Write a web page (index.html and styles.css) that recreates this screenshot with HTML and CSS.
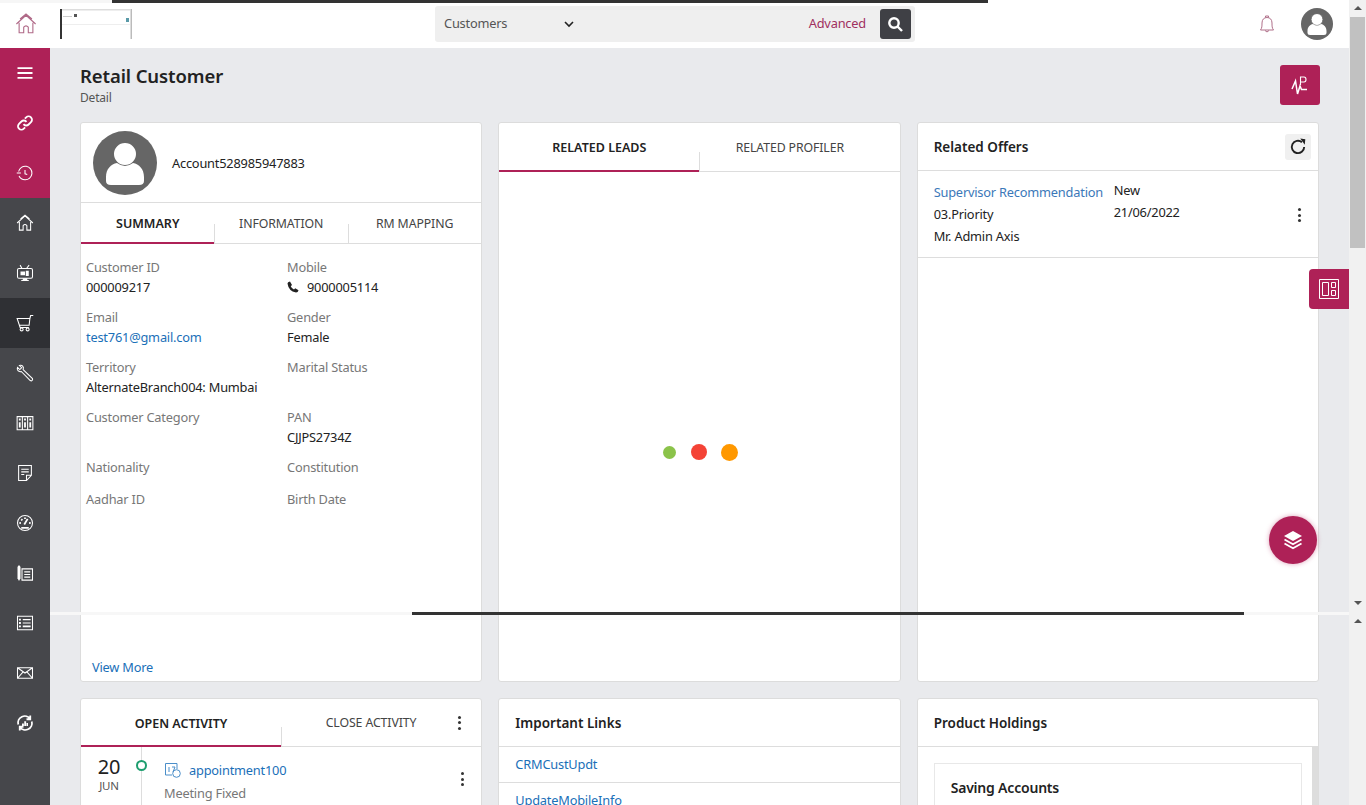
FILE: index.html
```html
<!DOCTYPE html>
<html lang="en">
<head>
    <meta charset="UTF-8">
    <meta name="viewport" content="width=device-width, initial-scale=1.0">
    <title>Retail Customer</title>
    <link rel="stylesheet" href="styles.css">
</head>
<body>
    <div class="app">
        <header class="topbar">
            <div class="top-home">
                <svg width="22" height="22" viewBox="0 0 24 24"><path d="M1.500 12 12 2.500 22.500 12M4.500 10.500V21.500H9.500V15.500Q12 12.500 14.500 15.500V21.500H19.500V10.500M5.500 6.500 12 1 18.500 6.500"/></svg>
            </div>
            <div class="logo">
                <svg width="72" height="30" viewBox="0 0 72 30"><rect width="72" height="30" fill="#fff"/><rect width="2" height="30" fill="#333"/><rect x="70.500" width="1.500" height="30" fill="#bbb"/><rect x="2" width="68" height="1.500" fill="#ddd"/><rect x="14" y="5" width="3" height="3" fill="#555"/><rect x="3" y="7" width="9" height="1" fill="#ccc"/><rect x="66" y="9" width="3" height="4" fill="#5a9aa8"/><rect x="2" y="15" width="68" height="1" fill="#eee"/></svg>
            </div>
            <div class="search">
                <div class="search-type">
                    <span>Customers</span>
                    <svg width="12" height="12" viewBox="0 0 12 12"><path d="M2 4 6 8 10 4"/></svg>
                </div>
                <a class="advanced">Advanced</a>
                <button class="search-btn">
                    <svg width="17" height="17" viewBox="0 0 17 17"><circle cx="7" cy="7" r="4.700"/><path d="M10.500 10.500 15 15"/></svg>
                </button>
            </div>
            <div class="top-right">
                <svg class="bell" width="20" height="20" viewBox="0 0 20 20"><path d="M3.500 16C5 14 5 12 5 9 5 5.500 7 3.500 10 3.500S15 5.500 15 9C15 12 15 14 16.500 16ZM8.500 3.500V2H11.500V3.500M8 16.500Q10 19.500 12 16.500"/></svg>
                <svg class="avatar" width="32" height="32" viewBox="0 0 64 64"><circle cx="32" cy="32" r="32" fill="#666"/><circle cx="32" cy="23" r="12" fill="#fff" stroke="#666" stroke-width="2"/><path d="M13 46C13 38 18 33 24 32Q32 38 40 32C46 33 51 38 51 46V50Q51 54 46 54H18Q13 54 13 50Z" fill="#fff"/></svg>
            </div>
        </header>

        <div class="workspace">
            <nav class="sidebar">
                <a class="nav-item brand"><svg class="nav-icon" viewBox="0 0 24 24"><path class="thick" d="M2 5.500H22M2 12H22M2 18.500H22"/></svg></a>
                <a class="nav-item brand"><svg class="nav-icon" viewBox="0 0 24 24"><path class="thick" d="M10 13.500a4.500 4.500 0 0 0 6.800.500l3.200-3.200a4.500 4.500 0 0 0-6.400-6.400l-1.800 1.800M14 10.500a4.500 4.500 0 0 0-6.800-.500l-3.200 3.200a4.500 4.500 0 0 0 6.400 6.400l1.800-1.800"/></svg></a>
                <a class="nav-item brand"><svg class="nav-icon" viewBox="0 0 24 24"><path d="M3.500 10A9 9 0 1 1 12 21 9 9 0 0 1 4 16M1 12H6.500M12 8V13L15 14"/></svg></a>
                <a class="nav-item"><svg class="nav-icon" viewBox="0 0 24 24"><path d="M1.500 12 12 2.500 22.500 12M4.500 10.500V21.500H9.500V15.500Q12 12.500 14.500 15.500V21.500H19.500V10.500M6 6.500 12 1.500 18 6.500"/></svg></a>
                <a class="nav-item"><svg class="nav-icon" viewBox="0 0 24 24"><path d="M4 6H20Q22 6 22 8V17Q22 19 20 19H4Q2 19 2 17V8Q2 6 4 6ZM8 6 5.500 1.500M14 6 17.500 1.500M7 22H17"/><path class="solid" d="M6 10H12V15H6ZM13 9H17V16H13ZM9 19H15V22H9Z"/></svg></a>
                <a class="nav-item active"><svg class="nav-icon" viewBox="0 0 24 24"><path d="M1.500 6H18.500L17.500 15H4.500ZM18.500 6 19.500 2H23M4.500 15 5.500 18H17"/><circle cx="7.500" cy="20.500" r="2"/><circle cx="15.500" cy="20.500" r="2"/></svg></a>
                <a class="nav-item"><svg class="nav-icon" viewBox="0 0 24 24"><path d="M2 4.500 5 7.500 7.500 5 4.500 2C8 .500 11 3.500 9.500 7.500L22 19.500Q22.500 21 21.500 22T19 22L7 10C3.500 11 .500 8 2 4.500Z"/></svg></a>
                <a class="nav-item"><svg class="nav-icon" viewBox="0 0 24 24"><path d="M1.500 3.500H22.500V21H1.500ZM8.500 3.500V21M15.500 3.500V21"/><path class="thick" d="M5 6V8.500M12 6V8.500M19 6V8.500M5 11V18M12 11V18M19 11V18"/></svg></a>
                <a class="nav-item"><svg class="nav-icon" viewBox="0 0 24 24"><path d="M3.500 2H20.500V15L14 22H3.500ZM14 22V15H20.500M7 7H17M7 10.500H17M7 14H11"/></svg></a>
                <a class="nav-item"><svg class="nav-icon" viewBox="0 0 24 24"><circle cx="12" cy="12" r="10"/><path class="thick" d="M12 4.500V6.500M4.500 12H6.500M17.500 12H19.500M7 7 8.500 8.500M15.500 6.500 11 14M7 18.500H17"/></svg></a>
                <a class="nav-item"><svg class="nav-icon" viewBox="0 0 24 24"><path d="M8 6.500H22V21.500H8ZM11 10.500H19M11 14H19M11 17.500H19"/><path class="solid" d="M2 4Q4-.500 6 4V19L4 22.500 2 19Z"/></svg></a>
                <a class="nav-item"><svg class="nav-icon" viewBox="0 0 24 24"><path d="M2 3H22V21H2ZM9 7.500H19.500M9 12H19.500"/><path class="thick" d="M4 7.500H6.500M4 12H6.500M4 16.500H6.500M9 16.500H19.500"/></svg></a>
                <a class="nav-item"><svg class="nav-icon" viewBox="0 0 24 24"><path d="M2 5H22V19H2ZM2 5 12 12 22 5M2 19 9.500 10.500M22 19 14.500 10.500"/></svg></a>
                <a class="nav-item"><svg class="nav-icon" viewBox="0 0 24 24"><path class="thick" d="M3 14A9 9 0 0 1 19 6.500M21 10A9 9 0 0 1 5 17.500M19 2V7H14M5 22V17H10"/><path class="solid" d="M8 12.500H10.500V16H8ZM11 9.500H13.500V16H11ZM14 12H16V16H14Z"/></svg></a>
            </nav>

            <main class="content">
                <div class="page-head">
                    <div>
                        <h1>Retail Customer</h1>
                        <div class="crumb">Detail</div>
                    </div>
                    <button class="pulse-btn">
                        <svg width="22" height="22" viewBox="0 0 22 22"><path d="M3 15 6.500 7 8.500 20 11 12 12.500 15.500H18"/><path d="M11.500 11V3H15Q17 3 17 5.500T15 8H11.500" class="thin"/></svg>
                    </button>
                </div>

                <div class="cards">
                    <section class="card tall">
                        <div class="profile">
                            <svg width="64" height="64" viewBox="0 0 64 64"><circle cx="32" cy="32" r="32" fill="#666"/><circle cx="32" cy="23" r="12" fill="#fff" stroke="#666" stroke-width="2"/><path d="M13 46C13 38 18 33 24 32Q32 38 40 32C46 33 51 38 51 46V50Q51 54 46 54H18Q13 54 13 50Z" fill="#fff"/></svg>
                            <span>Account528985947883</span>
                        </div>
                        <div class="tabs tabs-three">
                            <div class="tab on">SUMMARY</div>
                            <div class="tab split">INFORMATION</div>
                            <div class="tab split">RM MAPPING</div>
                        </div>
                        <div class="fields">
                            <div><div class="label">Customer ID</div><div class="value">000009217</div></div>
                            <div><div class="label">Mobile</div><div class="value phone"><svg width="12" height="12" viewBox="0 0 24 24"><path d="M6 1 10 8 7.500 10.500Q10 16 14 17L16.500 14.500 23 18.500Q22 23 18 23 3 20 1 5 1 2 6 1Z"/></svg>9000005114</div></div>
                            <div><div class="label">Email</div><div class="value"><a class="link">test761@gmail.com</a></div></div>
                            <div><div class="label">Gender</div><div class="value">Female</div></div>
                            <div><div class="label">Territory</div><div class="value">AlternateBranch004: Mumbai</div></div>
                            <div><div class="label">Marital Status</div></div>
                            <div><div class="label">Customer Category</div></div>
                            <div><div class="label">PAN</div><div class="value">CJJPS2734Z</div></div>
                            <div><div class="label">Nationality</div></div>
                            <div><div class="label">Constitution</div></div>
                            <div><div class="label">Aadhar ID</div></div>
                            <div><div class="label">Birth Date</div></div>
                        </div>
                        <a class="link view-more">View More</a>
                    </section>

                    <section class="card tall">
                        <div class="tabs tabs-leads">
                            <div class="tab on">RELATED LEADS</div>
                            <div class="tab split">RELATED PROFILER</div>
                        </div>
                        <div class="loader">
                            <i class="dot green"></i><i class="dot red"></i><i class="dot orange"></i>
                        </div>
                    </section>

                    <section class="card tall">
                        <div class="card-head">
                            <h2>Related Offers</h2>
                            <button class="refresh">
                                <svg width="18" height="18" viewBox="0 0 16 16"><path d="M13.500 8A5.500 5.500 0 1 1 11.500 3.700"/><path class="fill" d="M10 .500 14.500 1 14 6Z"/></svg>
                            </button>
                        </div>
                        <div class="offer">
                            <div class="offer-main">
                                <a class="link offer-link">Supervisor Recommendation</a>
                                <div>03.Priority</div>
                                <div>Mr. Admin Axis</div>
                            </div>
                            <div class="offer-side">
                                <div>New</div>
                                <div>21/06/2022</div>
                            </div>
                            <span class="kebab"><i></i><i></i><i></i></span>
                        </div>
                    </section>

                    <section class="card">
                        <div class="tabs tabs-activity">
                            <div class="tab on">OPEN ACTIVITY</div>
                            <div class="tab split">CLOSE ACTIVITY</div>
                            <span class="kebab"><i></i><i></i><i></i></span>
                        </div>
                        <div class="activity">
                            <div class="date"><b>20</b><span>JUN</span></div>
                            <div class="rail"><i></i></div>
                            <div class="activity-body">
                                <div class="activity-title">
                                    <svg width="18" height="18" viewBox="0 0 18 18"><path d="M1.500 2.500H13V8M1.500 2.500V14H8M5 6V11M8 6H11L9 11"/><circle cx="12.500" cy="12.500" r="3.800"/></svg>
                                    <a class="link">appointment100</a>
                                </div>
                                <div class="muted">Meeting Fixed</div>
                            </div>
                            <span class="kebab"><i></i><i></i><i></i></span>
                        </div>
                    </section>

                    <section class="card">
                        <div class="card-head"><h2>Important Links</h2></div>
                        <a class="link link-row">CRMCustUpdt</a>
                        <a class="link link-row">UpdateMobileInfo</a>
                    </section>

                    <section class="card">
                        <div class="card-head"><h2>Product Holdings</h2></div>
                        <div class="holdings">
                            <div class="holding"><h2>Saving Accounts</h2></div>
                        </div>
                    </section>
                </div>
            </main>
        </div>
    </div>

    <div class="scrollbar">
        <i class="arrow up"></i>
        <div class="thumb"></div>
        <i class="arrow down"></i>
        <i class="arrow up second"></i>
    </div>

    <!-- overlays -->
    <div class="progress-top"></div>
    <div class="seam"><div class="seam-bar"></div></div>
    <div class="side-tab">
        <svg width="20" height="20" viewBox="0 0 20 20"><path d="M.500.500H19.500V19.500H.500ZM3.500 3.500H9.500V16.500H3.500ZM12.500 3.500H16.500V8.500H12.500ZM12.500 11.500H16.500V16.500H12.500Z"/></svg>
    </div>
    <button class="fab">
        <svg width="20" height="20" viewBox="0 0 20 20"><path class="fill" d="M10 1 19 6 10 11 1 6Z"/><path d="M1.500 9.500 10 14.200 18.500 9.500M1.500 13.500 10 18.200 18.500 13.500"/></svg>
    </button>
</body>
</html>
```

FILE: styles.css
```css
* {
    box-sizing: border-box;
}
body {
    margin: 0;
    width: 1366px;
    height: 805px;
    overflow: hidden;
    display: flex;
    background-color: #e9eaed;
    font-family: "Noto Sans", sans-serif;
    font-size: 12.800px;
    letter-spacing: -.2px;
    color: #222;
}
a {
    text-decoration: none;
}
button {
    border: none;
    padding: 0;
    font: inherit;
}
h1, h2 {
    margin: 0;
}
svg {
    fill: none;
    stroke: currentColor;
}

/* frame */
.app {
    flex: 1;
    min-width: 0;
    display: flex;
    flex-direction: column;
}
.workspace {
    flex: 1;
    display: flex;
    min-height: 0;
}

/* top bar */
.topbar {
    height: 48px;
    flex: none;
    display: flex;
    align-items: center;
    background-color: #fff;
}
.top-home {
    width: 50px;
    padding-left: 2px;
    display: flex;
    justify-content: center;
    color: #b06a88;
}
.top-home svg {
    stroke-width: 1.200;
}
.logo {
    display: flex;
    margin-left: 10px;
}
.logo svg {
    stroke: none;
}
.search {
    width: 480px;
    height: 36px;
    margin-left: 303px;
    display: flex;
    align-items: center;
    background-color: #efefef;
    border-radius: 3px;
}
.search-type {
    width: 147px;
    padding: 0 7px 2px 9px;
    display: flex;
    align-items: center;
    justify-content: space-between;
    color: #555;
}
.search-type svg {
    stroke: #222;
    stroke-width: 1.6;
    margin-top: 2px;
}
.advanced {
    margin-left: auto;
    padding-bottom: 2px;
    color: #a0305f;
}
.search-btn {
    width: 31px;
    height: 30px;
    margin: 0 4px 0 14px;
    display: flex;
    align-items: center;
    justify-content: center;
    background-color: #3f4045;
    border-radius: 3px;
    color: #fff;
}
.search-btn svg {
    stroke-width: 2.4;
}
.top-right {
    flex: 1;
    display: flex;
    align-items: center;
    justify-content: flex-end;
    padding-right: 16px;
    gap: 24px;
}
.bell {
    color: #b0708a;
    stroke-width: 1;
}
.avatar {
    stroke: none;
}

/* sidebar */
.sidebar {
    width: 50px;
    flex: none;
    background-color: #46474b;
}
.nav-item {
    height: 50px;
    display: flex;
    align-items: center;
    justify-content: center;
    color: #fff;
}
.brand {
    background-color: #ae2157;
}
.active {
    background-color: #2f3034;
}
.nav-icon {
    width: 18px;
    height: 18px;
    stroke-width: 1.4;
}
.nav-icon .thick {
    stroke-width: 2.4;
}
.nav-icon .solid {
    fill: currentColor;
    stroke: none;
}

/* content */
.content {
    flex: 1;
    min-width: 0;
    padding: 17px 30px 0;
    overflow: hidden;
}
.page-head {
    height: 57px;
    display: flex;
    justify-content: space-between;
}
h1 {
    font-size: 18.500px;
    font-weight: 600;
    line-height: 22px;
    letter-spacing: -.1px;
}
.crumb {
    margin-top: 3px;
    font-size: 12px;
    line-height: 16px;
    color: #555;
}
.pulse-btn {
    width: 40px;
    height: 40px;
    margin-right: -1px;
    display: flex;
    align-items: center;
    justify-content: center;
    background-color: #ae2157;
    border-radius: 3px;
    color: #fff;
}
.pulse-btn svg {
    stroke-width: 1.5;
}
.pulse-btn .thin {
    stroke-width: 1.100;
}
.cards {
    display: grid;
    grid-template-columns: repeat(3, 1fr);
    grid-template-rows: 560px 300px;
    gap: 16px;
}
.card {
    display: flex;
    flex-direction: column;
    background-color: #fff;
    border: 1px solid #dcdcdc;
    border-radius: 3px;
    overflow: hidden;
}

/* profile card */
.profile {
    height: 80px;
    flex: none;
    padding: 8px 12px 0;
    display: flex;
    gap: 15px;
    border-bottom: 1px solid #ddd;
}
.profile svg {
    stroke: none;
}
.profile span {
    align-self: center;
    padding-bottom: 7px;
}

/* tabs */
.tabs {
    height: 41px;
    flex: none;
    display: flex;
    border-bottom: 1px solid #ddd;
}
.tab {
    flex: 1;
    display: flex;
    align-items: center;
    justify-content: center;
    font-size: 12.300px;
    letter-spacing: -.1px;
    color: #444;
    position: relative;
}
.tab.on {
    padding-top: 2px;
    font-size: 12.500px;
    letter-spacing: 0;
    font-weight: 600;
    color: #222;
    border-bottom: 2px solid #ae2157;
    margin-bottom: -1px;
}
.tab.split::before {
    content: "";
    position: absolute;
    left: 0;
    bottom: 0;
    height: 19px;
    border-left: 1px solid #ddd;
}
.tabs-leads {
    height: 49px;
}
.tabs-leads .tab:nth-child(1) {
    flex: none;
    width: 200px;
}
.tabs-leads .tab:nth-child(2) {
    flex: none;
    width: 181px;
}
.tabs-activity {
    height: 48px;
}
.tabs-activity .tab:nth-child(1) {
    flex: none;
    width: 200px;
}
.tabs-activity .tab:nth-child(2) {
    flex: none;
    width: 180px;
}

/* fields */
.fields {
    flex: 1;
    padding: 12px 0 0 5px;
    display: grid;
    grid-template-columns: 201px 1fr;
    grid-auto-rows: min-content;
    row-gap: 10px;
}
.label {
    line-height: 22px;
    color: #777;
}
.value {
    line-height: 18px;
    color: #222;
}
.phone {
    display: flex;
    align-items: center;
    gap: 8px;
}
.phone svg {
    fill: #222;
    stroke: none;
}
.link {
    color: #1a6fb8;
}
.view-more {
    padding: 0 0 5px 11px;
    line-height: 18px;
}

/* loader */
.loader {
    flex: 1;
    display: flex;
    align-items: center;
    justify-content: center;
    gap: 14px;
    padding: 51px 0 0 2px;
}
.dot {
    display: block;
    border-radius: 50%;
}
.green {
    width: 13px;
    height: 13px;
    margin-right: 1.500px;
    background-color: #8bc34a;
}
.red {
    width: 16px;
    height: 16px;
    background-color: #f44336;
}
.orange {
    width: 17px;
    height: 17px;
    background-color: #ff9800;
}

/* offers */
.card-head {
    height: 48px;
    flex: none;
    padding: 0 7px 0 16px;
    display: flex;
    align-items: center;
    justify-content: space-between;
    border-bottom: 1px solid #ddd;
}
h2 {
    font-size: 13.500px;
    font-weight: 600;
    letter-spacing: 0;
    color: #222;
}
.refresh {
    width: 26px;
    height: 26px;
    display: flex;
    align-items: center;
    justify-content: center;
    background-color: #f0f0f0;
    border-radius: 3px;
    color: #222;
}
.refresh svg {
    stroke-width: 1.700;
}
.fill {
    fill: currentColor;
    stroke: none;
}
.offer {
    height: 87px;
    flex: none;
    padding: 10px 0 0 16px;
    display: flex;
    border-bottom: 1px solid #ddd;
    line-height: 22px;
}
.offer-main {
    width: 180px;
}
.offer-link {
    color: #3b78b9;
}
.offer-side {
    margin-top: -2px;
}
.kebab {
    margin: 27px 16px 0 auto;
    width: 4px;
    display: flex;
    flex-direction: column;
    align-self: flex-start;
    gap: 2.500px;
}
.kebab i {
    width: 3px;
    height: 3px;
    border-radius: 50%;
    background-color: #333;
}
.tabs-activity .kebab {
    align-self: center;
    margin: 0 0 0 -3px;
}

/* activity */
.activity {
    flex: 1;
    display: flex;
}
.date {
    width: 60px;
    padding: 8px 4px 0 0;
    display: flex;
    flex-direction: column;
    align-items: center;
    color: #222;
}
.date b {
    font-size: 20px;
    font-weight: 400;
    line-height: 24px;
}
.date span {
    font-size: 11.500px;
    line-height: 14px;
    color: #555;
}
.rail {
    width: 1px;
    background-color: #ddd;
    position: relative;
}
.rail i {
    position: absolute;
    left: -5px;
    top: 13px;
    width: 11px;
    height: 11px;
    border: 2px solid #1e9e6f;
    border-radius: 50%;
    background-color: #fff;
}
.activity-body {
    padding: 14px 0 0 22px;
}
.activity-title {
    display: flex;
    align-items: center;
    gap: 7px;
}
.activity-title svg {
    color: #4a8ec9;
    stroke-width: 1;
}
.muted {
    margin-top: 5px;
    color: #777;
}
.activity .kebab {
    margin: 25px 16px 0 auto;
}

/* links and holdings */
.link-row {
    display: block;
    height: 36px;
    padding: 8px 16px 0;
    border-bottom: 1px solid #ddd;
}
.holdings {
    flex: 1;
    padding: 16px 10px 0 16px;
    border-right: 6px solid #ddd;
}
.holding {
    height: 200px;
    padding: 14px 16px;
    border: 1px solid #e8e8e8;
}
.holding h2 {
    font-size: 14px;
    letter-spacing: -.2px;
}

/* scrollbar */
.scrollbar {
    width: 17px;
    flex: none;
    display: flex;
    flex-direction: column;
    align-items: center;
    background-color: #f1f1f1;
    padding-top: 6px;
}
.arrow {
    width: 0;
    height: 0;
    border-left: 4px solid transparent;
    border-right: 4px solid transparent;
}
.up {
    border-bottom: 4px solid #555;
}
.down {
    margin-top: 353px;
    border-top: 4px solid #555;
}
.second {
    margin-top: 14px;
}
.thumb {
    width: 15px;
    height: 231px;
    margin-top: 7px;
    background-color: #c1c1c1;
}

/* overlays */
.progress-top {
    position: absolute;
    left: 0;
    top: 0;
    width: 988px;
    height: 3px;
    background: linear-gradient(90deg, #f6f6f6 112px, #333 112px);
}
.seam {
    position: absolute;
    left: 50px;
    top: 612px;
    width: 1299px;
    height: 3px;
    background-color: #f7f7f7;
}
.seam-bar {
    width: 832px;
    height: 3px;
    margin-left: 362px;
    background-color: #333;
}
.side-tab {
    position: absolute;
    left: 1309px;
    top: 269px;
    width: 40px;
    height: 40px;
    display: flex;
    align-items: center;
    justify-content: center;
    background-color: #ae2157;
    border-radius: 4px 0 0 4px;
    color: #fff;
}
.side-tab svg {
    stroke-width: 1;
}
.fab {
    position: absolute;
    left: 1269px;
    top: 516px;
    width: 48px;
    height: 48px;
    display: flex;
    align-items: center;
    justify-content: center;
    border-radius: 50%;
    background-color: #ae2157;
    box-shadow: 0 0 5px rgba(174, 33, 87, .4);
    color: #fff;
}
.fab svg {
    stroke-width: 1.800;
}
```
